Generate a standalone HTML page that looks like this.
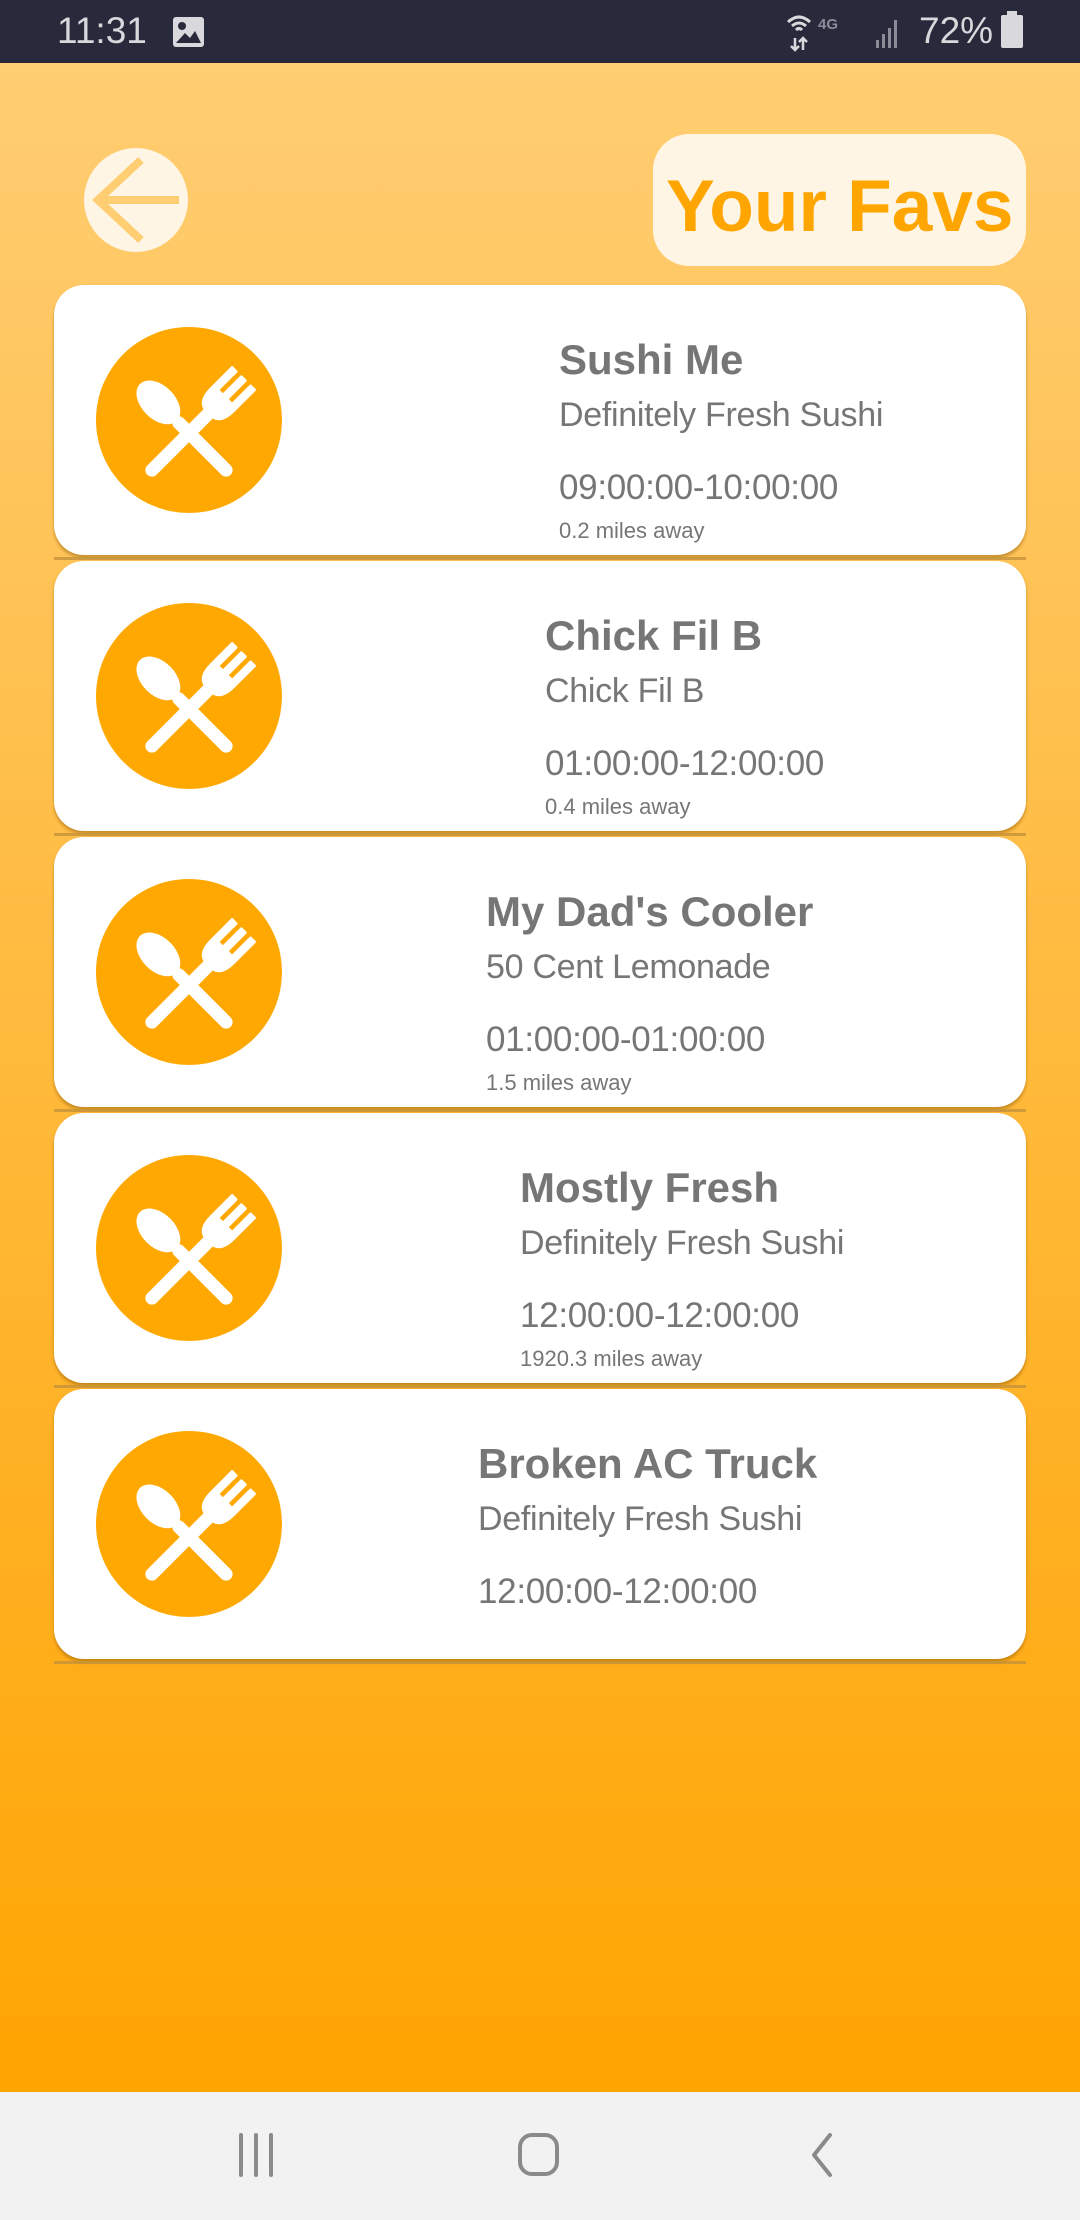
<!DOCTYPE html>
<html><head><meta charset="utf-8"><style>
*{margin:0;padding:0;box-sizing:border-box}
body{width:1080px;height:2220px;overflow:hidden;position:relative;font-family:"Liberation Sans",sans-serif;background:linear-gradient(#ffcd72 63px,#ffa502 2092px)}
.sb{position:absolute;left:0;top:0;width:1080px;height:63px;background:#282a3b;color:#d8d8dd}
.card{position:absolute;left:54px;width:972px;height:270px;background:#fff;border-radius:30px;box-shadow:0 3px 3px rgba(130,85,0,.45)}
.line{position:absolute;left:54px;width:972px;height:3px;background:#c4923a;opacity:.8}
.t{position:absolute;color:#767676;white-space:nowrap;line-height:1}
.ti{font-size:42px;font-weight:bold;top:54px}
.su{font-size:34px;top:113px;letter-spacing:-0.3px}
.tm{font-size:35px;top:185px;letter-spacing:-0.3px}
.mi{font-size:22px;top:235px}
.ic{position:absolute;width:186px;height:186px}
.nav{position:absolute;left:0;top:2092px;width:1080px;height:128px;background:#f2f2f2}
</style></head><body>
<div class="sb">
<div style="position:absolute;left:57px;top:12px;font-size:37px;line-height:1">11:31</div>
<svg style="position:absolute;left:172px;top:16px" width="33" height="32" viewBox="0 0 33 32"><rect x="1" y="1" width="31" height="30" rx="3" fill="#d8d8dd"/><circle cx="10" cy="10" r="4" fill="#282a3b"/><path d="M4 27 L13 17 L18 22 L23 15 L29 27Z" fill="#282a3b"/></svg>
<svg style="position:absolute;left:786px;top:12px" width="120" height="40" viewBox="0 0 120 40"><path d="M2 10 Q13 0 24 10 M6 14 Q13 8 20 14 M10 18 Q13 15 16 18" stroke="#d8d8dd" stroke-width="3" fill="none"/><path d="M9 26 v12 M5 34 l4 4 4-4 M17 38 v-12 M13 30 l4-4 4 4" stroke="#d8d8dd" stroke-width="2.5" fill="none"/><text x="32" y="17" font-size="15" font-weight="bold" fill="#8a8c98" font-family="Liberation Sans">4G</text><path d="M90 36h3v-8h-3z M96 36h3v-14h-3z M102 36h3v-20h-3z M108 36h3v-28h-3z" fill="#8a8c98"/></svg>
<div style="position:absolute;left:919px;top:12px;font-size:37px;line-height:1">72%</div>
<div style="position:absolute;left:1001px;top:15px;width:22px;height:33px;background:#d8d8dd;border-radius:2px"></div>
<div style="position:absolute;left:1007px;top:11px;width:10px;height:5px;background:#d8d8dd"></div>
</div>

<svg style="position:absolute;left:84px;top:148px" width="106" height="106" viewBox="0 0 106 106"><ellipse cx="52" cy="52" rx="52" ry="52" fill="#fff5e4"/><path d="M57 12 L14 52 L57 92 M14 52 H95" stroke="#ffcd72" stroke-width="8" fill="none"/></svg>

<div style="position:absolute;left:653px;top:134px;width:373px;height:132px;background:#fff5e4;border-radius:36px"></div>
<div style="position:absolute;left:666px;top:170px;font-size:73px;font-weight:bold;color:#ffa500;line-height:1;white-space:nowrap">Your Favs</div>

<svg width="0" height="0" style="position:absolute"><defs><g id="ut"><circle cx="100" cy="100" r="100" fill="#ffa802"/><g transform="translate(58,156) rotate(45)" fill="#fff"><rect x="-7" y="-95" width="14" height="99" rx="7"/><path d="M-17 -142 L-11 -142 L-11 -114 L-3 -114 L-3 -142 L3 -142 L3 -114 L11 -114 L11 -142 L17 -142 L17 -110 Q17 -93 7 -90 L-7 -90 Q-17 -93 -17 -110 Z" stroke="#fff" stroke-width="3" stroke-linejoin="round"/></g><g transform="translate(142,156) rotate(-45)" fill="#fff"><rect x="-7" y="-82" width="14" height="86" rx="7"/><ellipse cx="0" cy="-106" rx="18" ry="28"/></g></g></defs></svg>

<div class="card" style="top:285px"><svg class="ic" style="left:42px;top:42px" viewBox="0 0 200 200"><use href="#ut"/></svg>
<div class="t ti" style="left:505px">Sushi Me</div><div class="t su" style="left:505px">Definitely Fresh Sushi</div><div class="t tm" style="left:505px">09:00:00-10:00:00</div><div class="t mi" style="left:505px">0.2 miles away</div></div>
<div class="line" style="top:557px"></div>

<div class="card" style="top:561px"><svg class="ic" style="left:42px;top:42px" viewBox="0 0 200 200"><use href="#ut"/></svg>
<div class="t ti" style="left:491px">Chick Fil B</div><div class="t su" style="left:491px">Chick Fil B</div><div class="t tm" style="left:491px">01:00:00-12:00:00</div><div class="t mi" style="left:491px">0.4 miles away</div></div>
<div class="line" style="top:833px"></div>

<div class="card" style="top:837px"><svg class="ic" style="left:42px;top:42px" viewBox="0 0 200 200"><use href="#ut"/></svg>
<div class="t ti" style="left:432px">My Dad's Cooler</div><div class="t su" style="left:432px">50 Cent Lemonade</div><div class="t tm" style="left:432px">01:00:00-01:00:00</div><div class="t mi" style="left:432px">1.5 miles away</div></div>
<div class="line" style="top:1109px"></div>

<div class="card" style="top:1113px"><svg class="ic" style="left:42px;top:42px" viewBox="0 0 200 200"><use href="#ut"/></svg>
<div class="t ti" style="left:466px">Mostly Fresh</div><div class="t su" style="left:466px">Definitely Fresh Sushi</div><div class="t tm" style="left:466px">12:00:00-12:00:00</div><div class="t mi" style="left:466px">1920.3 miles away</div></div>
<div class="line" style="top:1385px"></div>

<div class="card" style="top:1389px"><svg class="ic" style="left:42px;top:42px" viewBox="0 0 200 200"><use href="#ut"/></svg>
<div class="t ti" style="left:424px">Broken AC Truck</div><div class="t su" style="left:424px">Definitely Fresh Sushi</div><div class="t tm" style="left:424px">12:00:00-12:00:00</div></div>
<div class="line" style="top:1661px"></div>

<div class="nav">
<svg style="position:absolute;left:236px;top:40px" width="44" height="46" viewBox="0 0 44 46"><path d="M5 3v40 M20 3v40 M35 3v40" stroke="#8a8a8a" stroke-width="4" stroke-linecap="round"/></svg>
<svg style="position:absolute;left:516px;top:40px" width="46" height="46" viewBox="0 0 46 46"><rect x="4" y="3" width="37" height="39" rx="12" stroke="#8a8a8a" stroke-width="4" fill="none"/></svg>
<svg style="position:absolute;left:804px;top:40px" width="34" height="46" viewBox="0 0 34 46"><path d="M26 3 L10 23 L26 43" stroke="#8a8a8a" stroke-width="4" stroke-linecap="round" stroke-linejoin="round" fill="none"/></svg>
</div>
</body></html>
